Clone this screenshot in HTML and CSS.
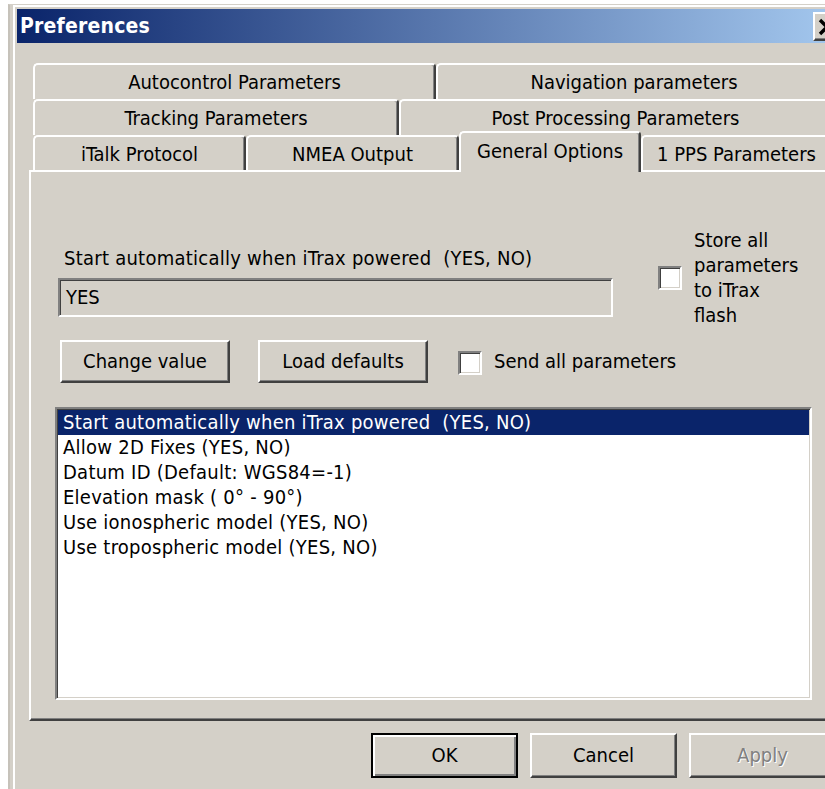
FILE: index.html
```html
<!DOCTYPE html>
<html lang="en">
<head>
<meta charset="utf-8">
<title>Preferences</title>
<link rel="stylesheet" href="styles.css">
</head>
<body>
<div class="window">
  <div class="frame">
    <div class="titlebar">
      <span class="title">Preferences</span>
      <button class="close" type="button" aria-label="Close">
        <svg width="32" height="29" viewBox="0 0 32 29"><path d="M7 8 L21 22 M21 8 L7 22" stroke="#000" stroke-width="3.4" fill="none"/></svg>
      </button>
    </div>
    <div class="content">
      <div class="tabs">
        <div class="tab-row">
          <div class="tab w-auto">Autocontrol Parameters</div>
          <div class="tab fill">Navigation parameters</div>
        </div>
        <div class="tab-row">
          <div class="tab w-track">Tracking Parameters</div>
          <div class="tab fill">Post Processing Parameters</div>
        </div>
        <div class="tab-row last">
          <div class="tab w-italk">iTalk Protocol</div>
          <div class="tab w-nmea">NMEA Output</div>
          <div class="tab w-general selected">General Options</div>
          <div class="tab fill">1 PPS Parameters</div>
        </div>
      </div>
      <div class="panel">
        <div class="top-section">
          <div class="value-col">
            <div class="value-label">Start automatically when iTrax powered&nbsp; (YES, NO)</div>
            <div class="value-field">YES</div>
          </div>
          <label class="check store">
            <span class="box"></span>
            <span class="check-text">Store all<br>parameters<br>to iTrax<br>flash</span>
          </label>
        </div>
        <div class="action-row">
          <button class="btn action" type="button">Change value</button>
          <button class="btn action" type="button">Load defaults</button>
          <label class="check send">
            <span class="box"></span>
            <span class="check-text">Send all parameters</span>
          </label>
        </div>
        <ul class="listbox">
          <li class="sel">Start automatically when iTrax powered&nbsp; (YES, NO)</li>
          <li>Allow 2D Fixes (YES, NO)</li>
          <li>Datum ID (Default: WGS84=-1)</li>
          <li>Elevation mask ( 0° - 90°)</li>
          <li>Use ionospheric model (YES, NO)</li>
          <li>Use tropospheric model (YES, NO)</li>
        </ul>
      </div>
      <div class="dialog-buttons">
        <button class="btn dlg default" type="button">OK</button>
        <button class="btn dlg" type="button">Cancel</button>
        <button class="btn dlg" type="button" disabled>Apply</button>
      </div>
    </div>
  </div>
</div>
</body>
</html>
```

FILE: styles.css
```css
html, body {
  margin: 0;
  padding: 0;
  background: #ffffff;
  width: 825px;
  height: 789px;
  overflow: hidden;
}

body {
  font-family: "DejaVu Sans Condensed", "DejaVu Sans", sans-serif;
  font-stretch: semi-condensed;
  font-size: 20px;
  color: #000;
}

/* outer window frame: light grey edge, then white highlight */
.window {
  margin: 4px 0 0 8px;
  width: 860px;
  height: 800px;
  border-top: 1px solid #d4d0c8;
  border-left: 2px solid #c6c2ba;
  padding-left: 3px;
  background: #d4d0c8;
}

.frame {
  width: 831px;
  height: 790px;
  border-top: 2px solid #fff;
  border-left: 2px solid #fff;
  padding: 2px 0 0 2px;
}

/* caption */
.titlebar {
  height: 34px;
  display: flex;
  align-items: center;
  padding-left: 3px;
  background: linear-gradient(to right, #0a246a 0%, #a6caf0 100%);
}

.title {
  color: #fff;
  font-weight: bold;
  font-size: 21px;
  letter-spacing: 0.2px;
}

.close {
  margin-left: auto;
  margin-right: 3px;
  width: 32px;
  height: 29px;
  padding: 0;
  background: #d4d0c8;
  border: 2px solid;
  border-color: #fff #404040 #404040 #fff;
  box-shadow: inset -1px -1px #808080;
  display: block;
}

.close svg {
  display: block;
  margin: -2px 0 0 -2px;
}

.content {
  padding: 20px 12px 0 12px;
}

/* multi-row tab strip */
.tabs {
  margin: 0 4px;
}

.tab-row {
  display: flex;
  height: 36px;
}

.tab-row.last {
  height: 35px;
}

.tab {
  box-sizing: border-box;
  height: 100%;
  display: flex;
  align-items: center;
  justify-content: center;
  white-space: nowrap;
  background: #d4d0c8;
  border-top: 2px solid #fff;
  border-left: 2px solid #fff;
  border-right: 2px solid #404040;
  border-top-left-radius: 5px;
  border-top-right-radius: 4px;
  box-shadow: inset -1px 0 #808080;
}

.w-auto { width: 403px; }
.w-track { width: 366px; }
.w-italk { width: 213px; }
.w-nmea { width: 213px; }
.w-general { width: 182px; }
.fill { flex: 1; }

.tab.selected {
  position: relative;
  z-index: 1;
  height: 41px;
  margin-top: -4px;
  padding-bottom: 3px;
  align-self: flex-start;
}

/* tab page */
.panel {
  box-sizing: border-box;
  height: 551px;
  border-top: 2px solid #fff;
  border-left: 2px solid #fff;
  border-bottom: 2px solid #404040;
  box-shadow: inset 0 -1px #808080;
  padding: 56px 0 0 24px;
}

.top-section {
  display: flex;
  height: 100px;
}

.value-col {
  margin: 18px 0 0 3px;
  width: 555px;
}

.value-label {
  line-height: 24px;
  padding-left: 6px;
  white-space: nowrap;
  letter-spacing: 0.25px;
}

.value-field {
  box-sizing: border-box;
  margin-top: 8px;
  height: 39px;
  line-height: 35px;
  padding-left: 6px;
  background: #d4d0c8;
  border: 2px solid;
  border-color: #808080 #fff #fff #808080;
  box-shadow: inset 1px 1px #404040;
}

.check {
  display: flex;
  align-items: center;
}

.box {
  box-sizing: border-box;
  flex: none;
  width: 24px;
  height: 24px;
  background: #fff;
  border: 2px solid;
  border-color: #808080 #fff #fff #808080;
  box-shadow: inset 1px 1px #404040, inset -1px -1px #d4d0c8;
}

.check-text {
  margin-left: 12px;
  line-height: 25px;
  white-space: nowrap;
}

.store {
  margin-left: 45px;
}

.action-row {
  display: flex;
  align-items: center;
  margin: 12px 0 0 5px;
  height: 43px;
}

.btn {
  box-sizing: border-box;
  font: inherit;
  color: #000;
  background: #d4d0c8;
  padding: 0;
  border: 2px solid;
  border-color: #fff #404040 #404040 #fff;
  box-shadow: inset -1px -1px #808080;
}

.btn.action {
  width: 170px;
  height: 43px;
  margin-right: 28px;
  padding-bottom: 2px;
}

.send {
  margin-left: 2px;
}

.send .box {
  margin-top: 3px;
}

/* list of option names */
.listbox {
  box-sizing: border-box;
  list-style: none;
  margin: 24px 0 0 0;
  padding: 1px 0 0 1px;
  width: 757px;
  height: 293px;
  background: #fff;
  border: 2px solid;
  border-color: #808080 #fff #fff #808080;
  box-shadow: inset 1px 1px #404040, inset -1px -1px #d4d0c8;
}

.listbox li {
  height: 25px;
  line-height: 25px;
  padding-left: 5px;
  margin-right: 1px;
  white-space: nowrap;
  letter-spacing: 0.25px;
}

.listbox li.sel {
  background: #0a246a;
  color: #fff;
}

/* OK / Cancel / Apply */
.dialog-buttons {
  display: flex;
  justify-content: flex-end;
  gap: 12px;
  margin-top: 12px;
}

.btn.dlg {
  width: 147px;
  height: 45px;
  padding-bottom: 2px;
}

.btn.default {
  border: 2px solid #000;
  box-shadow: inset 2px 2px #fff, inset -2px -2px #808080;
}

.btn:disabled {
  color: #808080;
  text-shadow: 1px 1px 0 #fff;
}
```
